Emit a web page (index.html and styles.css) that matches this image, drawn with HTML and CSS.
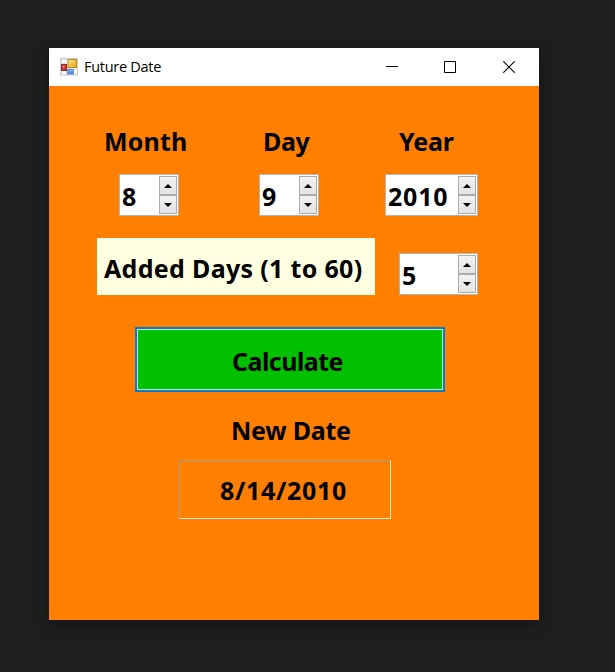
FILE: index.html
```html
<!DOCTYPE html>
<html lang="en">
<head>
<meta charset="utf-8">
<title>Future Date</title>
<link rel="stylesheet" href="styles.css">
</head>
<body>
<main class="window">
  <header class="titlebar">
    <svg class="app-icon" width="18" height="18" viewBox="0 0 18 18">
      <defs>
        <linearGradient id="gold" x2="1" y2="1"><stop offset="0" stop-color="#ffe98c"/><stop offset="1" stop-color="#e3a512"/></linearGradient>
        <linearGradient id="blue" x2="0" y2="1"><stop offset="0" stop-color="#8dbcf8"/><stop offset="1" stop-color="#3f7fdc"/></linearGradient>
      </defs>
      <rect x=".5" y=".5" width="17" height="16.5" fill="#e0e2e5" stroke="#c9ccd0"/>
      <path d="M2 2h2.500v3H2zM5.200 2H7v3H5.200zM2 13h4v3H2zM14 11.500h3V16h-3z" fill="#fff"/>
      <rect x="1.500" y="6.500" width="5" height="6" fill="#c83a36" stroke="#a32120"/>
      <rect x="2.500" y="7.500" width="2" height="2" fill="#e98983"/>
      <rect x="8" y="1.500" width="8.500" height="8" fill="url(#gold)" stroke="#bd8c17"/>
      <rect x="7.500" y="11.500" width="6" height="4.500" fill="url(#blue)" stroke="#5c8fd8"/>
    </svg>
    <h1 class="title">Future Date</h1>
    <div class="controls">
      <svg width="12" height="12" viewBox="0 0 12 12"><path d="M0 5.500h12" stroke="#000"/></svg>
      <svg width="12" height="12" viewBox="0 0 12 12"><path d="M.5.5h11v11H.5z" fill="none" stroke="#000"/></svg>
      <svg width="12" height="12" viewBox="0 0 12 12"><path d="M.3.300l11.400 11.400M11.700.300.300 11.700" stroke="#000" stroke-width="1.100"/></svg>
    </div>
  </header>
  <form class="form">
    <div class="date-row">
      <div class="field month">
        <span class="label">Month</span>
        <div class="spinner"><span class="value">8</span><span class="steps"><i class="step up"></i><i class="step down"></i></span></div>
      </div>
      <div class="field day">
        <span class="label">Day</span>
        <div class="spinner"><span class="value">9</span><span class="steps"><i class="step up"></i><i class="step down"></i></span></div>
      </div>
      <div class="field year">
        <span class="label">Year</span>
        <div class="spinner"><span class="value">2010</span><span class="steps"><i class="step up"></i><i class="step down"></i></span></div>
      </div>
    </div>
    <div class="added-row">
      <span class="added-label">Added Days (1 to 60)</span>
      <div class="spinner"><span class="value">5</span><span class="steps"><i class="step up"></i><i class="step down"></i></span></div>
    </div>
    <button class="calculate" type="button"><span>Calculate</span></button>
    <span class="new-date">New Date</span>
    <output class="result">8/14/2010</output>
  </form>
</main>
</body>
</html>
```
FILE: styles.css
```css
* { box-sizing: border-box; }

body {
  margin: 0;
  min-height: 672px;
  padding: 48px 0 0 49px;
  background: #1e1e1e;
  color: #000;
  font: bold 25px/34px "Noto Sans", "Open Sans", sans-serif;
}

.window {
  display: flex;
  flex-direction: column;
  width: 490px;
  height: 572px;
  background: #ff8000;
  box-shadow: 0 4px 14px rgba(0, 0, 0, .35);
}

.titlebar {
  display: flex;
  align-items: center;
  height: 38px;
  padding: 0 24px 0 11px;
  background: #fff;
}

.title {
  margin: 0 0 0 6px;
  font: 400 14.500px/20px "Open Sans", "Noto Sans", sans-serif;
  letter-spacing: -.28px;
}

.controls {
  display: grid;
  grid-template-columns: 58px 59px 12px;
  margin-left: auto;
}

.form {
  display: flex;
  flex-direction: column;
  align-items: flex-start;
  white-space: nowrap;
}

.date-row {
  display: flex;
  margin: 38px 0 0 55px;
}

.field { width: 158px; }
.field.year { width: 92px; }
.label { display: block; height: 50px; }
.month .label { letter-spacing: .2px; }
.day .label { padding-left: 1px; letter-spacing: -.4px; }
.year .label { padding-left: 1px; letter-spacing: -.2px; }
.month .spinner { margin-left: 15px; }
.day .spinner { margin-left: -3px; }
.year { margin-left: -22px; }
.year .spinner { margin-left: -13px; width: 93px; }

.spinner {
  display: flex;
  justify-content: space-between;
  width: 60px;
  height: 42px;
  padding: 1px 1px 1px 2px;
  background: #fff;
  border: 1px solid #b9b2a8;
}

.value { padding-top: 3px; letter-spacing: .8px; }

.steps {
  display: grid;
  grid-template-rows: 19px 19px;
  width: 18px;
}

.step {
  display: grid;
  place-items: center;
  background: linear-gradient(#f2f2f2, #e3e3e3);
  border: 1px solid #acacac;
}

.step::before {
  content: "";
  border: 4px solid transparent;
}

.up::before { border-top: 0; border-bottom: 4px solid #000; }
.down::before { border-bottom: 0; border-top: 4px solid #000; }

.added-row {
  display: flex;
  align-items: flex-end;
  gap: 24px;
  margin: 22px 0 0 48px;
}

.added-row .spinner { width: 79px; }

.added-label {
  width: 278px;
  height: 57px;
  padding: 13px 0 0 7px;
  background: #ffffe1;
  letter-spacing: .32px;
}

.calculate {
  width: 310px;
  height: 65px;
  margin: 32px 0 0 86px;
  padding: 3px 5px 0 0;
  border: 2px solid #0f76c8;
  outline: 0;
  box-shadow: inset 0 0 0 1px #b8f0d8;
  background: #00c000;
  color: inherit;
  font: inherit;
  letter-spacing: -.55px;
}

.new-date { margin: 21px 0 0 182px; letter-spacing: -.25px; }

.result {
  width: 212px;
  height: 59px;
  margin: 13px 0 0 130px;
  padding: 12px 3px 0 0;
  border: 1px solid;
  border-color: #b09a80 #fff0e0 #fff0e0 #b09a80;
  text-align: center;
  letter-spacing: .7px;
}
```
